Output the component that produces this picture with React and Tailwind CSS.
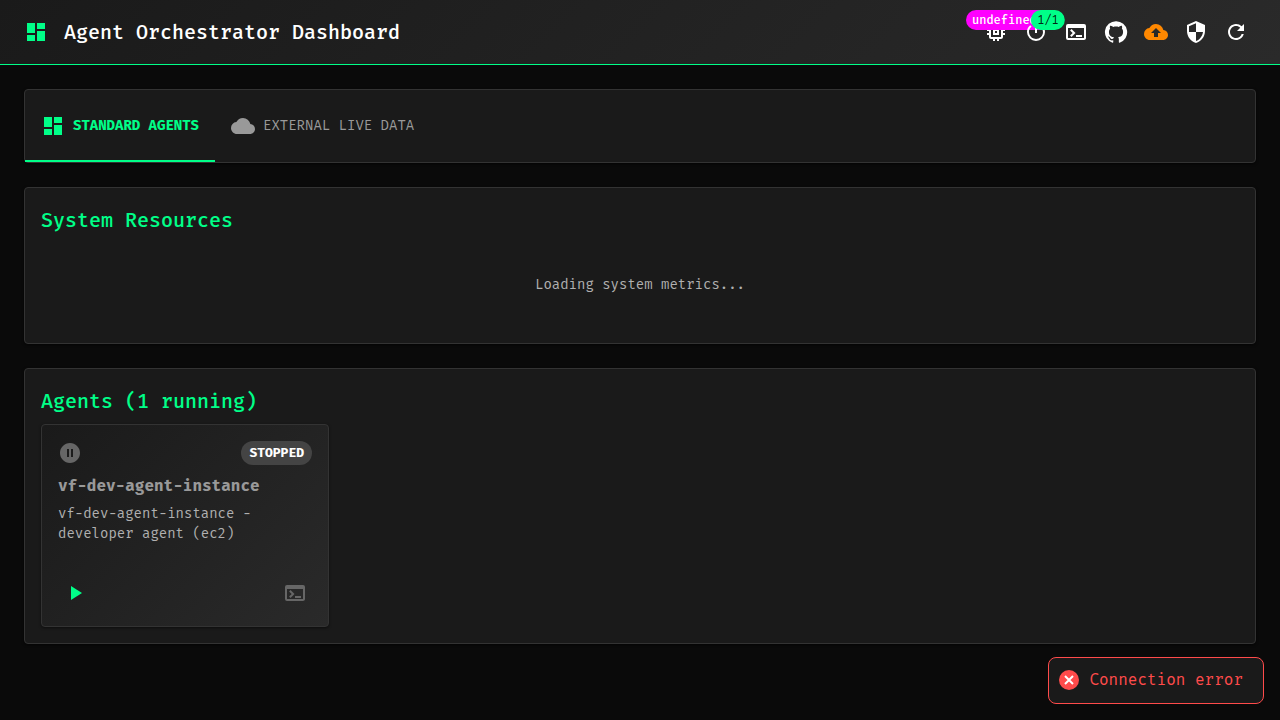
import {
  MdDashboard, MdMemory, MdPowerSettingsNew, MdTerminal, MdBackup, MdSecurity,
  MdRefresh, MdCloud, MdPauseCircleFilled, MdPlayArrow,
} from "react-icons/md";

function GitHubIcon() {
  return (
    <svg viewBox="0 0 24 24" className="size-6 fill-current" aria-hidden="true">
      <path d="M12 1.27a11 11 0 00-3.48 21.46c.55.09.73-.28.73-.55v-1.84c-3.03.64-3.67-1.46-3.67-1.46-.55-1.29-1.28-1.65-1.28-1.65-.92-.65.1-.65.1-.65 1.1 0 1.73 1.1 1.73 1.1.92 1.65 2.57 1.2 3.21.92a2 2 0 01.64-1.47c-2.47-.27-5.04-1.19-5.04-5.5 0-1.1.46-2.1 1.2-2.84a3.76 3.76 0 010-2.93s.91-.28 3.11 1.1c1.8-.49 3.7-.49 5.5 0 2.1-1.38 3.02-1.1 3.02-1.1a3.76 3.76 0 01.1 2.93c.83.74 1.2 1.74 1.2 2.94 0 4.21-2.57 5.13-5.04 5.4.45.37.82.92.82 2.02v3.03c0 .27.1.64.73.55A11 11 0 0012 1.27" />
    </svg>
  );
}

function IconButton({ label, color = "text-white", badge, badgeColor, children }) {
  return (
    <button type="button" aria-label={label} className={`p-2 ${color}`}>
      <span className="relative block">
        {children}
        {badge && (
          <span className={`absolute top-0 right-0 flex h-5 translate-x-1/2 -translate-y-1/2 items-center rounded-full px-1.5 text-xs whitespace-nowrap ${badgeColor}`}>
            {badge}
          </span>
        )}
      </span>
    </button>
  );
}

function Panel({ children, className = "" }) {
  return (
    <section className={`rounded border border-[#333] bg-[#1a1a1a] shadow-sm shadow-black/40 ${className}`}>
      {children}
    </section>
  );
}

export default function App() {
  return (
    <div className="min-h-screen bg-[#0a0a0a] font-['Fira_Mono','Noto_Sans_Mono','Liberation_Mono',monospace] text-white">
      <header className="flex h-[65px] items-center border-b border-[#00ff88] bg-linear-135 from-[#1a1a1a] to-[#2a2a2a] px-6">
        <MdDashboard className="mr-4 size-6 text-[#00ff88]" />
        <h1 className="flex-1 text-xl leading-8 font-medium">Agent Orchestrator Dashboard</h1>
        <div className="flex">
          <IconButton label="CPU usage" badge="undefined%" badgeColor="bg-[#ff00ff] font-medium text-white"><MdMemory className="size-6" /></IconButton>
          <IconButton label="Running agents" badge="1/1" badgeColor="bg-[#00ff88] text-black/87"><MdPowerSettingsNew className="size-6" /></IconButton>
          <IconButton label="Terminal"><MdTerminal className="size-6" /></IconButton>
          <IconButton label="GitHub"><GitHubIcon /></IconButton>
          <IconButton label="Backup" color="text-[#ff8800]"><MdBackup className="size-6" /></IconButton>
          <IconButton label="Security"><MdSecurity className="size-6" /></IconButton>
          <IconButton label="Refresh"><MdRefresh className="size-6" /></IconButton>
        </div>
      </header>

      <main className="flex flex-col gap-6 p-6">
        <Panel>
          <div role="tablist" className="flex h-18">
            <button type="button" role="tab" aria-selected="true" className="flex items-center gap-2 border-b-2 border-[#00ff88] px-4 pt-0.5 text-sm font-bold text-[#00ff88]">
              <MdDashboard className="size-6" />
              STANDARD AGENTS
            </button>
            <button type="button" role="tab" aria-selected="false" className="flex items-center gap-2 border-b-2 border-transparent px-4 pt-0.5 text-sm text-[#999]">
              <MdCloud className="size-6" />
              EXTERNAL LIVE DATA
            </button>
          </div>
        </Panel>

        <Panel className="p-4">
          <h2 className="text-xl leading-8 font-medium text-[#00ff88]">System Resources</h2>
          <p className="pt-[39px] pb-8 text-center text-sm leading-5 text-[#b0b0b0]">Loading system metrics...</p>
        </Panel>

        <Panel className="p-4">
          <h2 className="mb-[7px] text-xl leading-8 font-medium text-[#00ff88]">Agents (1 running)</h2>
          <article className="w-72 rounded border border-[#333] bg-linear-135 from-[#1a1a1a] to-[#2a2a2a] p-4 shadow-sm shadow-black/40">
            <div className="flex items-center justify-between">
              <MdPauseCircleFilled className="size-6 text-[#666]" />
              <span className="rounded-full bg-[#444] px-2 text-[13px] leading-6 font-bold">STOPPED</span>
            </div>
            <h3 className="mt-2 leading-[26px] font-bold text-[#999]">vf-dev-agent-instance</h3>
            <p className="mt-[5px] text-sm leading-5 text-[#b0b0b0]">vf-dev-agent-instance - developer agent (ec2)</p>
            <div className="mt-8 flex items-center justify-between">
              <button type="button" aria-label="Start agent" className="p-[5px] text-[#00ff88]"><MdPlayArrow className="size-6" /></button>
              <button type="button" aria-label="Open terminal" className="p-[5px] text-[#666]"><MdTerminal className="size-6" /></button>
            </div>
          </article>
        </Panel>
      </main>

      <div role="alert" className="fixed right-4 bottom-4 flex items-center gap-2.5 rounded-lg border border-[#ff4b4b] bg-[#1a1a1a] pt-2.5 pr-5 pb-[11px] pl-2.5 text-[#ff4b4b]">
        <svg viewBox="0 0 20 20" className="size-5" aria-hidden="true">
          <circle cx="10" cy="10" r="10" fill="#ff4b4b" />
          <path d="M6 6l8 8M14 6l-8 8" stroke="#fff" strokeWidth="2" />
        </svg>
        Connection error
      </div>
    </div>
  );
}
